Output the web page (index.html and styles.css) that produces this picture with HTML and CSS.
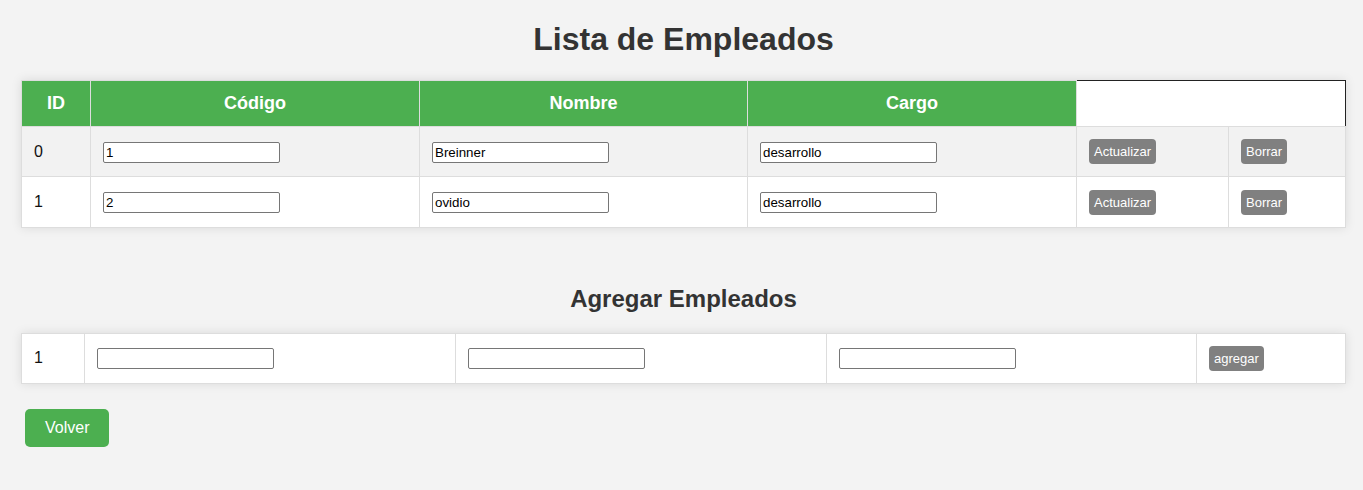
FILE: index.html
```html
<!DOCTYPE html>
<html lang="es">
<head>
<meta charset="utf-8">
<title>Lista de Empleados</title>
<link rel="stylesheet" href="styles.css">
</head>
<body>
<main class="page">
  <h1 class="title">Lista de Empleados</h1>
  <table class="grid list">
    <colgroup>
      <col class="c-id"><col class="c-wide"><col class="c-mid"><col class="c-wide"><col class="c-act"><col class="c-del">
    </colgroup>
    <thead>
      <tr>
        <th>ID</th><th>Código</th><th>Nombre</th><th>Cargo</th><th class="blank" colspan="2"></th>
      </tr>
    </thead>
    <tbody>
      <tr class="alt">
        <td>0</td>
        <td><input class="field" type="text" value="1"></td>
        <td><input class="field" type="text" value="Breinner"></td>
        <td><input class="field" type="text" value="desarrollo"></td>
        <td><button class="small">Actualizar</button></td>
        <td><button class="small">Borrar</button></td>
      </tr>
      <tr>
        <td>1</td>
        <td><input class="field" type="text" value="2"></td>
        <td><input class="field" type="text" value="ovidio"></td>
        <td><input class="field" type="text" value="desarrollo"></td>
        <td><button class="small">Actualizar</button></td>
        <td><button class="small">Borrar</button></td>
      </tr>
    </tbody>
  </table>

  <h2 class="subtitle">Agregar Empleados</h2>
  <table class="grid add">
    <colgroup>
      <col class="a-id"><col class="a-wide"><col class="a-wide"><col class="a-wide3"><col class="a-btn">
    </colgroup>
    <tbody>
      <tr>
        <td>1</td>
        <td><input class="field" type="text"></td>
        <td><input class="field" type="text"></td>
        <td><input class="field" type="text"></td>
        <td><button class="small">agregar</button></td>
      </tr>
    </tbody>
  </table>

  <button class="back">Volver</button>
</main>
</body>
</html>
```

FILE: styles.css
```css
html, body {
  margin: 0;
  padding: 0;
  background: #f3f3f3;
}

body {
  font-family: "Liberation Sans", Arial, sans-serif;
  color: #333;
}

.page {
  padding: 21px 17px 40px 21px;
}

.title {
  margin: 0 0 22px;
  font-size: 32px;
  line-height: 37px;
  text-align: center;
  font-weight: bold;
  color: #333;
}

.subtitle {
  margin: 57px 0 20px;
  font-size: 24px;
  line-height: 28px;
  text-align: center;
  font-weight: bold;
  color: #333;
}

.grid {
  width: 1324px;
  border-collapse: collapse;
  table-layout: fixed;
  background: #fff;
  box-shadow: 0 0 10px rgba(0, 0, 0, 0.1);
}

.c-id { width: 69px; }
.c-wide { width: 329px; }
.c-mid { width: 328px; }
.c-act { width: 152px; }
.c-del { width: 117px; }

.a-id { width: 63px; }
.a-wide { width: 371px; }
.a-wide3 { width: 370px; }
.a-btn { width: 149px; }

.grid th {
  background: #4caf50;
  color: #fff;
  font-size: 18px;
  line-height: 21px;
  font-weight: bold;
  padding: 12px;
  border: 1px solid #ddd;
  text-align: center;
}

.grid th.blank {
  background: #fff;
  border-top: 1px solid #222;
  border-right: 1px solid #222;
}

.grid td {
  border: 1px solid #ddd;
  padding: 12px;
  height: 24px;
  font-size: 16px;
  line-height: 24px;
  color: #111;
  vertical-align: middle;
  text-align: left;
}

.grid tr.alt td {
  background: #f2f2f2;
}

.field {
  box-sizing: border-box;
  width: 177px;
  height: 21px;
  margin: 0;
  padding: 1px 2px;
  border: 1px solid #767676;
  border-radius: 2px;
  background: #fff;
  font-family: "Liberation Sans", Arial, sans-serif;
  font-size: 13.333px;
  color: #000;
  vertical-align: middle;
}

.small {
  background: #808080;
  color: #fff;
  border: none;
  border-radius: 4px;
  padding: 5px 5px;
  font-family: "Liberation Sans", Arial, sans-serif;
  font-size: 13px;
  line-height: 15px;
  vertical-align: middle;
  cursor: pointer;
}

.back {
  display: block;
  margin: 25px 0 0 4px;
  background: #4caf50;
  color: #fff;
  border: none;
  border-radius: 5px;
  padding: 10px 20px;
  font-family: "Liberation Sans", Arial, sans-serif;
  font-size: 16px;
  line-height: 18px;
  cursor: pointer;
}
```
